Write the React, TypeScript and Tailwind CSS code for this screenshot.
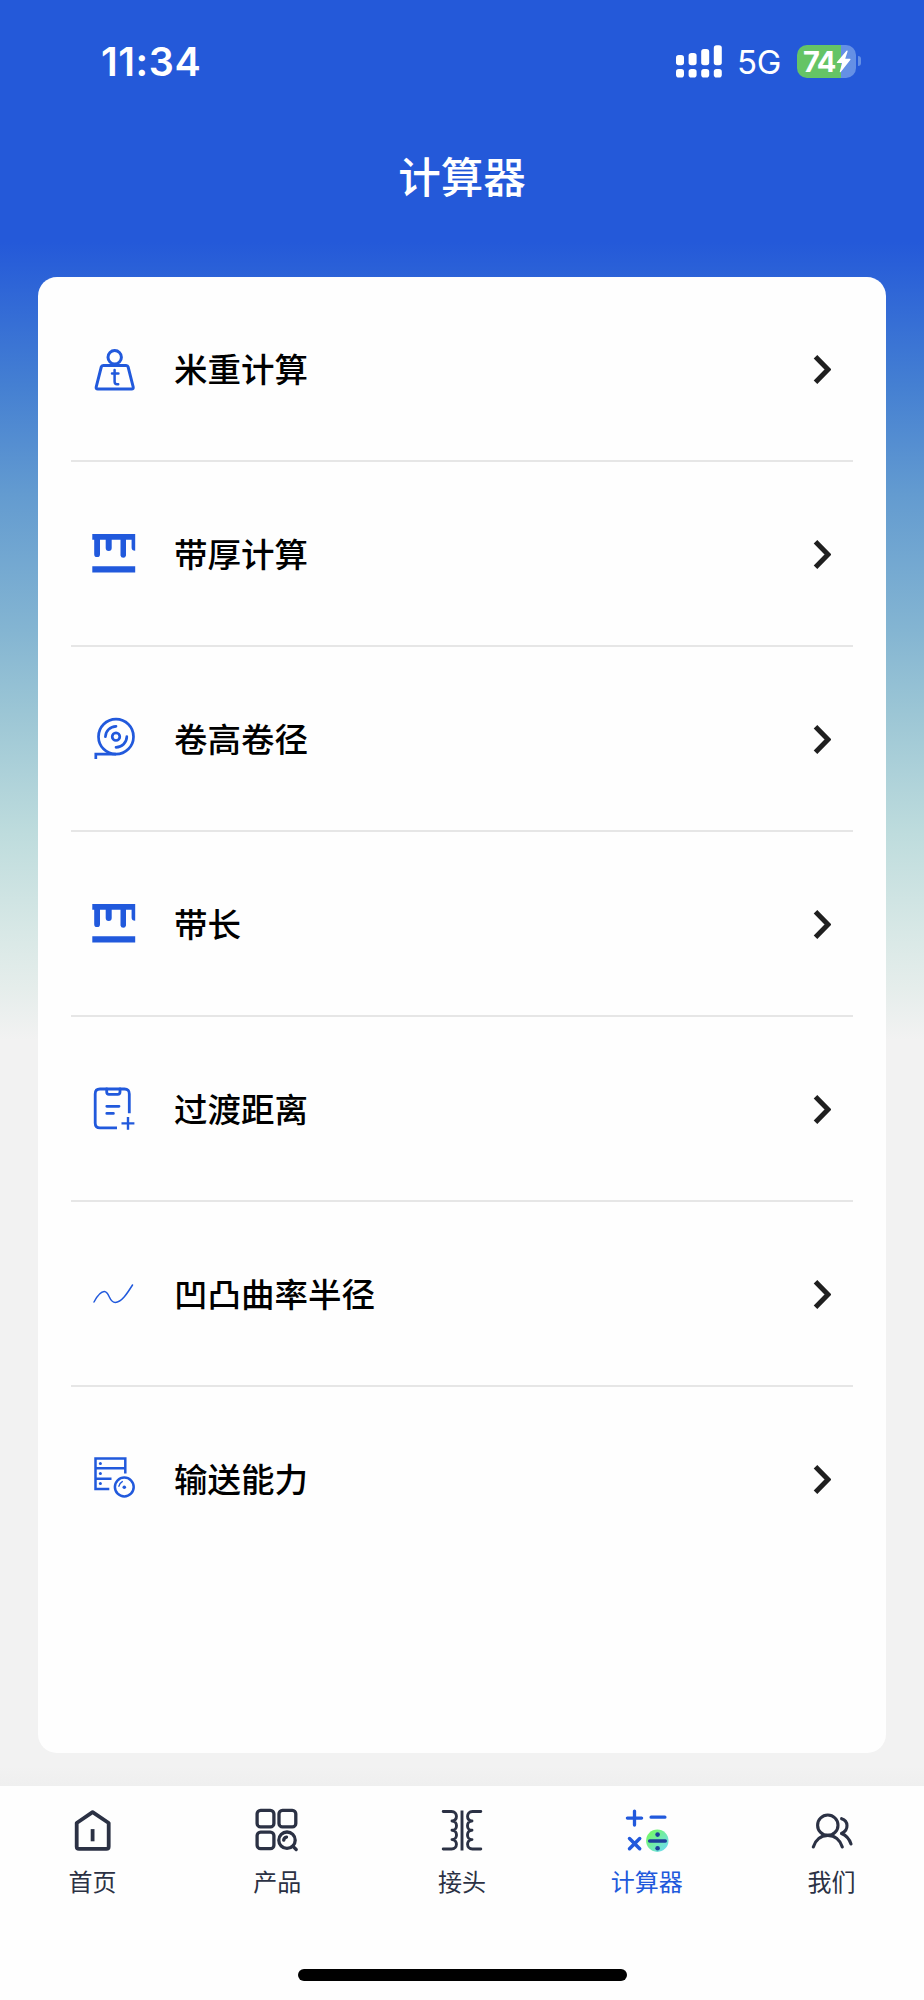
import type { ReactNode } from "react";

type Item = {
  label: string;
  icon: ReactNode;
};

type IconProps = {
  width?: number;
  children: ReactNode;
};

const LineIcon = ({ width = 3, children }: IconProps) => (
  <svg
    width="48"
    height="48"
    viewBox="0 0 48 48"
    fill="none"
    stroke="currentColor"
    strokeWidth={width}
    strokeLinecap="round"
    strokeLinejoin="round"
  >
    {children}
  </svg>
);

const WeightIcon = () => (
  <LineIcon>
    <circle cx="24.7" cy="11.2" r="6.7" />
    <path d="M13.2 19.4H36.2Q37.7 19.4 38.1 20.9L43.2 41Q43.6 43 41.6 43H7.8Q5.8 43 6.2 41L11.3 20.9Q11.7 19.4 13.2 19.4Z" />
    <path d="M24.6 24V35.4Q24.6 38.2 27 38.2H28.2M22 27.6H28.4" strokeWidth="2.5" />
  </LineIcon>
);

const BeltIcon = () => (
  <svg width="48" height="48" viewBox="0 0 48 48" fill="currentColor">
    <path d="M2.3 3H45.2V19.7Q41.6 19.7 41.6 16.5V8.8H36V24.4A2.8 2.8 0 0 1 30.5 24.4V8.8H21.7V17A3 3 0 0 1 15.7 17V8.8H10V23.2A2.9 2.9 0 0 1 4.2 23.2V8.8H2.3Z" />
    <path d="M2.3 35.2H45.2V41.4H2.3Z" />
  </svg>
);

const ReelIcon = () => (
  <LineIcon width={2.7}>
    <circle cx="26" cy="20.7" r="17.5" />
    <circle cx="26" cy="20.7" r="3.8" />
    <path d="M15.4 20.7A10.8 10.8 0 0 1 26 10.3M36.8 20.7A10.8 10.8 0 0 1 26 31.3" />
    <path d="M26 38.2H5.8V43" strokeLinecap="butt" strokeLinejoin="miter" />
  </LineIcon>
);

const ClipboardIcon = () => (
  <LineIcon width={2.8}>
    <path d="M39.3 27.3V8Q39.3 3 34.5 3H10Q5.2 3 5.2 8V37Q5.2 41.9 10 41.9H27" strokeLinecap="butt" />
    <path d="M16.7 3V6Q16.7 8.3 19 8.3H27.7Q30 8.3 30 6V3" />
    <path d="M16.8 20.3H29M16.8 27.4H23.4" />
    <path d="M38 31V43.8M31.5 37.4H44.4" strokeWidth="2.4" strokeLinecap="butt" />
  </LineIcon>
);

const CurveIcon = () => (
  <LineIcon width={1.5}>
    <path d="M4 31C7 25.5 10.5 20.5 14.3 20.6C20 20.8 18.5 31.4 25.3 31.4C31.5 31.4 37.5 22 42.5 14" />
  </LineIcon>
);

const ServerIcon = () => (
  <LineIcon width={2.5}>
    <g strokeLinecap="butt" strokeLinejoin="miter">
      <path d="M35.3 17.5V2.5H5.5V33H19.3" />
      <path d="M5.5 12.3H35.3M5.5 22.7H21.5" />
    </g>
    <circle cx="34.3" cy="31" r="9.4" />
    <path d="M28.9 30.2Q29.6 27 32.3 25.6" strokeWidth="1.4" />
    <g fill="currentColor" stroke="none">
      <circle cx="10.4" cy="7.5" r="1.5" />
      <circle cx="10.4" cy="17.4" r="1.5" />
      <circle cx="10.4" cy="27.4" r="1.5" />
      <circle cx="34.3" cy="31.3" r="1.8" />
    </g>
  </LineIcon>
);

const HomeIcon = () => (
  <LineIcon width={3.8}>
    <path d="M24.6 5.1L40.7 16V39.5Q40.7 41.9 38.4 41.9H11Q8.7 41.9 8.7 39.5V16Z" />
    <path d="M24.6 22.1V34.3" strokeLinecap="butt" />
  </LineIcon>
);

const ProductIcon = () => (
  <LineIcon width={3.3}>
    <rect x="4.1" y="3.3" width="16.8" height="16.6" rx="3.5" />
    <rect x="26" y="3.3" width="16.8" height="16.6" rx="3.5" />
    <rect x="4.1" y="25.1" width="16.8" height="16.6" rx="3.5" />
    <circle cx="34" cy="33.2" r="8.2" />
    <path d="M40 39.3L43.2 42.5M30.7 33.2Q31 30.6 33.5 30.1" />
  </LineIcon>
);

const JointIcon = () => (
  <LineIcon width={2.9}>
    <path d="M24 3.5V43.5" strokeLinecap="butt" />
    <path d="M5.2 4.5H13.5C20 4.5 20 14 14 14C20 14 20 23.3 14 23.3C20 23.3 20 32.6 14 32.6C20 32.6 20 42 13.5 42H5.2" />
    <path d="M42.8 4.5H34.5C28 4.5 28 14 34 14C28 14 28 23.3 34 23.3C28 23.3 28 32.6 34 32.6C28 32.6 28 42 34.5 42H42.8" />
  </LineIcon>
);

const CalculatorIcon = () => (
  <LineIcon width={3.3}>
    <defs>
      <linearGradient id="divide" x1="0" y1="0" x2="1" y2="1">
        <stop offset="0.2" stopColor="#74f673" />
        <stop offset="0.9" stopColor="#6edcf0" />
      </linearGradient>
    </defs>
    <path d="M11.5 4.1V18.1M4.4 11.1H18.6M28.1 10.2H41.9" />
    <path d="M6.5 31.6L16.7 41.7M16.7 31.6L6.5 41.7" strokeWidth="3.5" />
    <circle cx="34.3" cy="33.7" r="11.2" fill="url(#divide)" stroke="none" />
    <path d="M26.6 34H42.4" stroke="#1d3f9a" />
    <circle cx="34.6" cy="27.6" r="2.3" fill="#1d3f9a" stroke="none" />
    <circle cx="34.6" cy="41.2" r="2.3" fill="#1d3f9a" stroke="none" />
  </LineIcon>
);

const UsersIcon = () => (
  <LineIcon width={3.1}>
    <circle cx="19.8" cy="18.2" r="10.2" />
    <path d="M5.3 40C7.5 32.8 13 28.4 19.8 28.4S32.1 32.8 34.3 40" />
    <path d="M33.6 11.7C40.3 13.7 41.3 22.8 33.5 26.5C37.8 28.2 41.3 31.8 43 37" />
  </LineIcon>
);

const items: Item[] = [
  { label: "米重计算", icon: <WeightIcon /> },
  { label: "带厚计算", icon: <BeltIcon /> },
  { label: "卷高卷径", icon: <ReelIcon /> },
  { label: "带长", icon: <BeltIcon /> },
  { label: "过渡距离", icon: <ClipboardIcon /> },
  { label: "凹凸曲率半径", icon: <CurveIcon /> },
  { label: "输送能力", icon: <ServerIcon /> },
];

const tabs: Item[] = [
  { label: "首页", icon: <HomeIcon /> },
  { label: "产品", icon: <ProductIcon /> },
  { label: "接头", icon: <JointIcon /> },
  { label: "计算器", icon: <CalculatorIcon /> },
  { label: "我们", icon: <UsersIcon /> },
];

const StatusBar = () => (
  <div className="flex h-[122px] items-center justify-between pr-[63px] pl-[101px] text-white">
    <span className="pt-[4px] font-['Inter'] text-[39.5px] leading-none font-semibold tracking-[0.6px]">11:34</span>
    <div className="flex items-center">
      <svg width="46" height="33" viewBox="0 0 46 33" fill="white">
        <rect x="0" y="10" width="8" height="10.3" rx="2.8" />
        <rect x="12.6" y="8" width="8" height="12.3" rx="2.8" />
        <rect x="25.2" y="4" width="8" height="16.3" rx="2.8" />
        <rect x="37.8" y="0.3" width="8" height="20" rx="2.8" />
        <rect x="0" y="24" width="8" height="8.6" rx="2.8" />
        <rect x="12.6" y="24" width="8" height="8.6" rx="2.8" />
        <rect x="25.2" y="24" width="8" height="8.6" rx="2.8" />
        <rect x="37.8" y="24" width="8" height="8.6" rx="2.8" />
      </svg>
      <span className="ml-[15px] w-[45px] pt-[2px] font-['Inter'] text-[33px] leading-none tracking-[-0.3px]">5G</span>
      <div className="ml-[15px] flex h-[33px] w-[59px] items-center rounded-[10px] bg-linear-to-r from-[#65c466] from-75% to-[#6590e5] to-75% pl-[6px]">
        <span className="w-[33px] font-['Inter'] text-[29px] leading-none font-bold tracking-[-1.5px]">74</span>
        <svg width="15" height="23" viewBox="0 0 15 23" fill="white">
          <path d="M10.5 0.7L0.8 12.3Q0.3 13.1 1.3 13.1H6L3.8 21.4Q3.7 22.8 4.8 21.9L14.4 9.7Q14.8 8.8 13.8 8.8H9.2L11.6 1.4Q11.7 0 10.5 0.7Z" />
        </svg>
      </div>
      <div className="ml-[2px] h-[10px] w-[3px] rounded-r-full bg-[#6590e5]" />
    </div>
  </div>
);

const App = () => {
  return (
    <div className="flex h-[2000px] w-[924px] flex-col bg-[#f2f2f2] bg-[linear-gradient(180deg,#2459d9_242px,#447fd2_384px,#639bd0_494px,#84b5d2_631px,#9cc6d5_714px,#bedcdd_834px,#d8e8e6_933px,#e5edeb_988px,#f2f2f2_1040px)] font-['Noto_Sans_CJK_SC',sans-serif]">
      <StatusBar />
      <h1 className="flex h-[155px] items-start justify-center pt-[32px] text-[42.5px] leading-[42px] font-medium text-white">
        计算器
      </h1>

      <main className="mx-[38px] h-[1476px] rounded-[19px] bg-[#fefefe] px-[33px]">
        {items.map((item) => (
          <div
            key={item.label}
            className="flex h-[185px] items-center border-b-2 border-[#e6e6e6] pl-[19px] last:border-transparent"
          >
            <span className="pt-[2px] text-[#2159dc]">{item.icon}</span>
            <span className="ml-[36px] flex-1 pb-[2px] text-[33.5px] leading-none font-medium text-black">{item.label}</span>
            <svg className="mr-[22px]" width="18" height="32" viewBox="0 0 18 32" fill="none">
              <path d="M2.5 3.7L15 16.5L2.5 29.3" stroke="#1f1f1f" strokeWidth="5" />
            </svg>
          </div>
        ))}
      </main>

      <div className="h-[33px] bg-linear-to-b from-transparent from-40% to-[#efefef]" />

      <nav className="h-[214px] bg-[#fefefe]">
        <div className="grid grid-cols-5 pt-[21px]">
          {tabs.map((tab) => (
            <div
              key={tab.label}
              className={`flex flex-col items-center ${tab.label === "计算器" ? "text-[#2159dc]" : "text-[#2b3144]"}`}
            >
              {tab.icon}
              <span className="mt-[14px] text-[24px] leading-[24px] font-normal">{tab.label}</span>
            </div>
          ))}
        </div>
        <div className="mx-auto mt-[76px] h-[12px] w-[329px] rounded-full bg-black" />
      </nav>
    </div>
  );
};

export default App;
